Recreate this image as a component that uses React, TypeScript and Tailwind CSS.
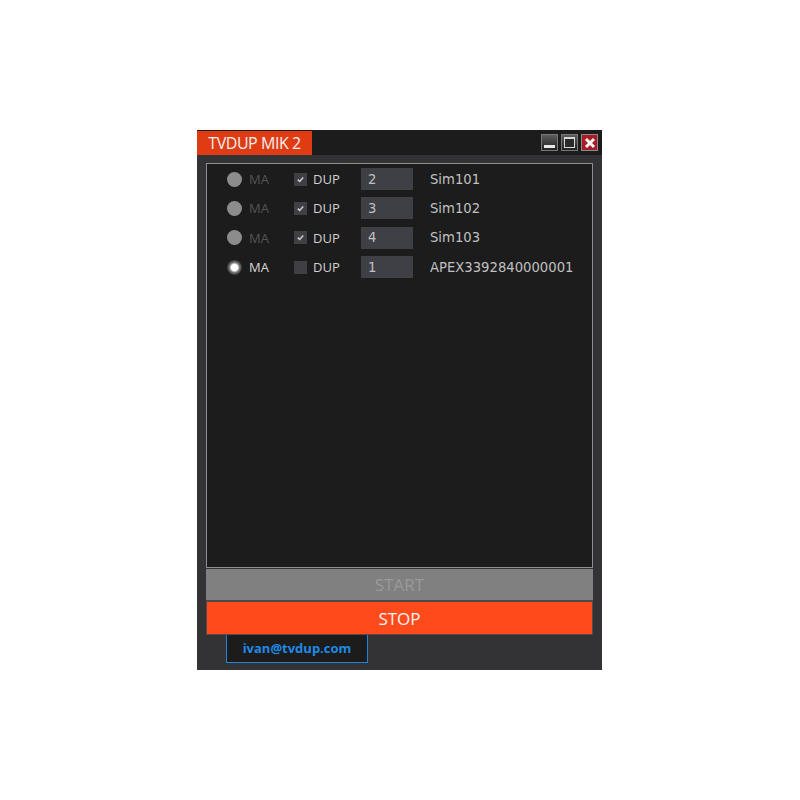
const rows = [
  { on: false, dup: true, n: "2", name: "Sim101" },
  { on: false, dup: true, n: "3", name: "Sim102" },
  { on: false, dup: true, n: "4", name: "Sim103" },
  { on: true, dup: false, n: "1", name: "APEX3392840000001" },
];

function Row({ on, dup, n, name }: { on: boolean; dup: boolean; n: string; name: string }) {
  return (
    <div className="flex h-[22px] items-center">
      <div
        className={`ml-[20px] h-[15px] w-[15px] rounded-full ${
          on
            ? "bg-[radial-gradient(closest-side,#ffffff_0,#ffffff_42%,#777777_68%,#4a4a4a_90%,#333333_100%)]"
            : "bg-[#8c8c8c]"
        }`}
      />
      <span className={`ml-[7px] w-[45px] pt-px font-['Open_Sans'] text-[13px] ${on ? "text-[#d8d8d8]" : "text-[#555555]"}`}>MA</span>
      <div className="flex h-[13px] w-[13px] items-center justify-center bg-[#3f3f46]">
        {dup && (
          <svg width="9" height="9" viewBox="0 0 9 9">
            <path d="M1.8 4.6 L3.7 6.5 L7.2 2.6" fill="none" stroke="#d0d0d0" strokeWidth="1.5" />
          </svg>
        )}
      </div>
      <span className="ml-[6px] w-[48px] pt-px font-['Open_Sans'] text-[13px] text-[#d0d0d0]">DUP</span>
      <div className="flex h-[22px] w-[52px] items-center bg-[#3f3f46] pl-[7px] pt-px font-['DejaVu_Sans'] text-[13.2px] text-[#c0c0c0]">{n}</div>
      <span className="ml-[17px] pt-px font-['DejaVu_Sans'] text-[13.2px] text-[#c0c0c0]">{name}</span>
    </div>
  );
}

export default function App() {
  return (
    <div className="h-[800px] w-[800px] bg-white pl-[197px] pt-[130px]">
      <div className="flex h-[540px] w-[405px] flex-col bg-[#333336]">
        <div className="flex h-[25px] items-start justify-between bg-[#1c1c1c] pt-px">
          <div className="flex h-[24px] w-[115px] items-center justify-center bg-[#e03c14] font-['Open_Sans'] text-[16px] tracking-[-0.45px] text-[#f0f0f0]">TVDUP MIK 2</div>
          <div className="mr-[4px] mt-[3px] flex gap-[3px]">
            <div className="flex h-[17px] w-[17px] items-end justify-center border border-[#777777] bg-gradient-to-b from-[#5c5c5c] to-[#222222] pb-[2px]">
              <div className="h-[3px] w-[11px] bg-[#e8e8e8]" />
            </div>
            <div className="flex h-[17px] w-[17px] items-center justify-center border border-[#777777] bg-gradient-to-b from-[#5c5c5c] to-[#222222]">
              <div className="h-[11px] w-[11px] border border-t-2 border-[#d8d8d8] bg-[#2a2a2a]" />
            </div>
            <div className="flex h-[17px] w-[17px] items-center justify-center border border-[#8a8a8a] bg-[#a81c28]">
              <svg width="12" height="12" viewBox="0 0 12 12">
                <path d="M2 2 L10 10 M10 2 L2 10" stroke="#f4f4f4" strokeWidth="3" />
              </svg>
            </div>
          </div>
        </div>
        <div className="mx-[9px] mt-[8px] flex h-[405px] flex-col gap-[7.4px] border border-[#8f8f8f] bg-[#1c1c1c] pt-[4px]">
          {rows.map((r) => (
            <Row key={r.n} {...r} />
          ))}
        </div>
        <div className="mx-[9px] mt-[1px] flex h-[33px] items-center justify-center border-b-2 border-[#4a4a4a] bg-[#808080] font-['Open_Sans'] text-[17px] text-[#9a9a9a]">START</div>
        <div className="mx-[9px] flex h-[33px] items-center justify-center border-x border-b border-[#5a4a44] bg-[#ff4a1c] pt-px font-['Open_Sans'] text-[17px] text-[#f5f5f5]">STOP</div>
        <div className="ml-[29px] box-border flex h-[28px] w-[142px] items-center justify-center border border-t-0 border-[#1f84dc] bg-[#1c1c1c] font-['Open_Sans'] text-[13px] font-bold text-[#1e8ae6]">ivan@tvdup.com</div>
      </div>
    </div>
  );
}
